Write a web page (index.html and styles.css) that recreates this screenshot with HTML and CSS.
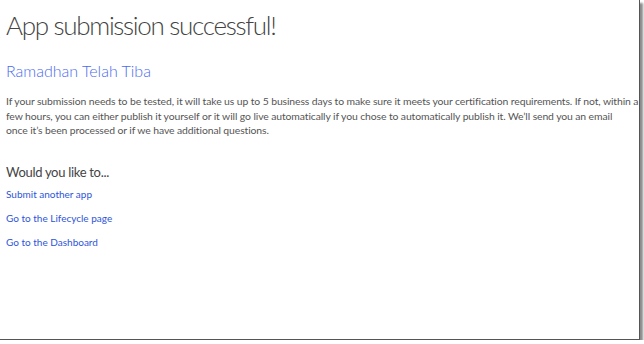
FILE: index.html
```html
<!DOCTYPE html>
<html>

<head>
    <meta charset="UTF-8">
    <meta name="viewport" content="width=device-width, initial-scale=1.0">
    <title>App submission successful</title>
    <link rel="stylesheet" href="styles.css">
</head>

<body>
    <div class="frame">
        <h1>App submission successful!</h1>
        <h2 class="app-name">Ramadhan Telah Tiba</h2>
        <p class="info">If your submission needs to be tested, it will take us up to 5 business days to make sure it meets your certification requirements. If not, within a few hours, you can either publish it yourself or it will go live automatically if you chose to automatically publish it. We’ll send you an email<br>once it’s been processed or if we have additional questions.</p>

        <h3>Would you like to...</h3>
        <ul class="links">
            <li><a href="#">Submit another app</a></li>
            <li><a href="#">Go to the Lifecycle page</a></li>
            <li><a href="#">Go to the Dashboard</a></li>
        </ul>
    </div>
</body>

</html>
```

FILE: styles.css
```css
body {
    margin: 0;
    background: #fff;
    font-family: Lato, "Open Sans", sans-serif;
}
.frame {
    width: 633px;
    height: 339px;
    padding: 0 0 0 6px;
    background: white;
    border-right: 1px solid #555;
    border-bottom: 1px solid #555;
    box-shadow: 3px 3px 2px rgba(0,0,0,0.45);
    overflow: hidden;
}
h1 {
    margin: 0;
    padding-top: 8px;
    font-size: 26px;
    font-weight: 300;
    letter-spacing: -1.3px;
    color: #444;
    line-height: 34px;
}
.app-name {
    margin: 18px 0 0;
    font-size: 16px;
    font-weight: 300;
    color: #4a6cf0;
    line-height: 22px;
}
.info {
    margin: 12px 0 0;
    font-size: 10.4px;
    line-height: 14.5px;
    letter-spacing: -0.1px;
    color: #555;
}
h3 {
    margin: 24px 0 0;
    font-size: 13px;
    font-weight: 400;
    letter-spacing: -0.3px;
    color: #444;
    line-height: 20px;
}
.links {
    list-style: none;
    margin: 3px 0 0;
    padding: 0;
}
.links li {
    height: 24px;
    line-height: 14px;
}
.links a {
    font-size: 10px;
    color: #2d55d8;
    text-decoration: none;
}
```
